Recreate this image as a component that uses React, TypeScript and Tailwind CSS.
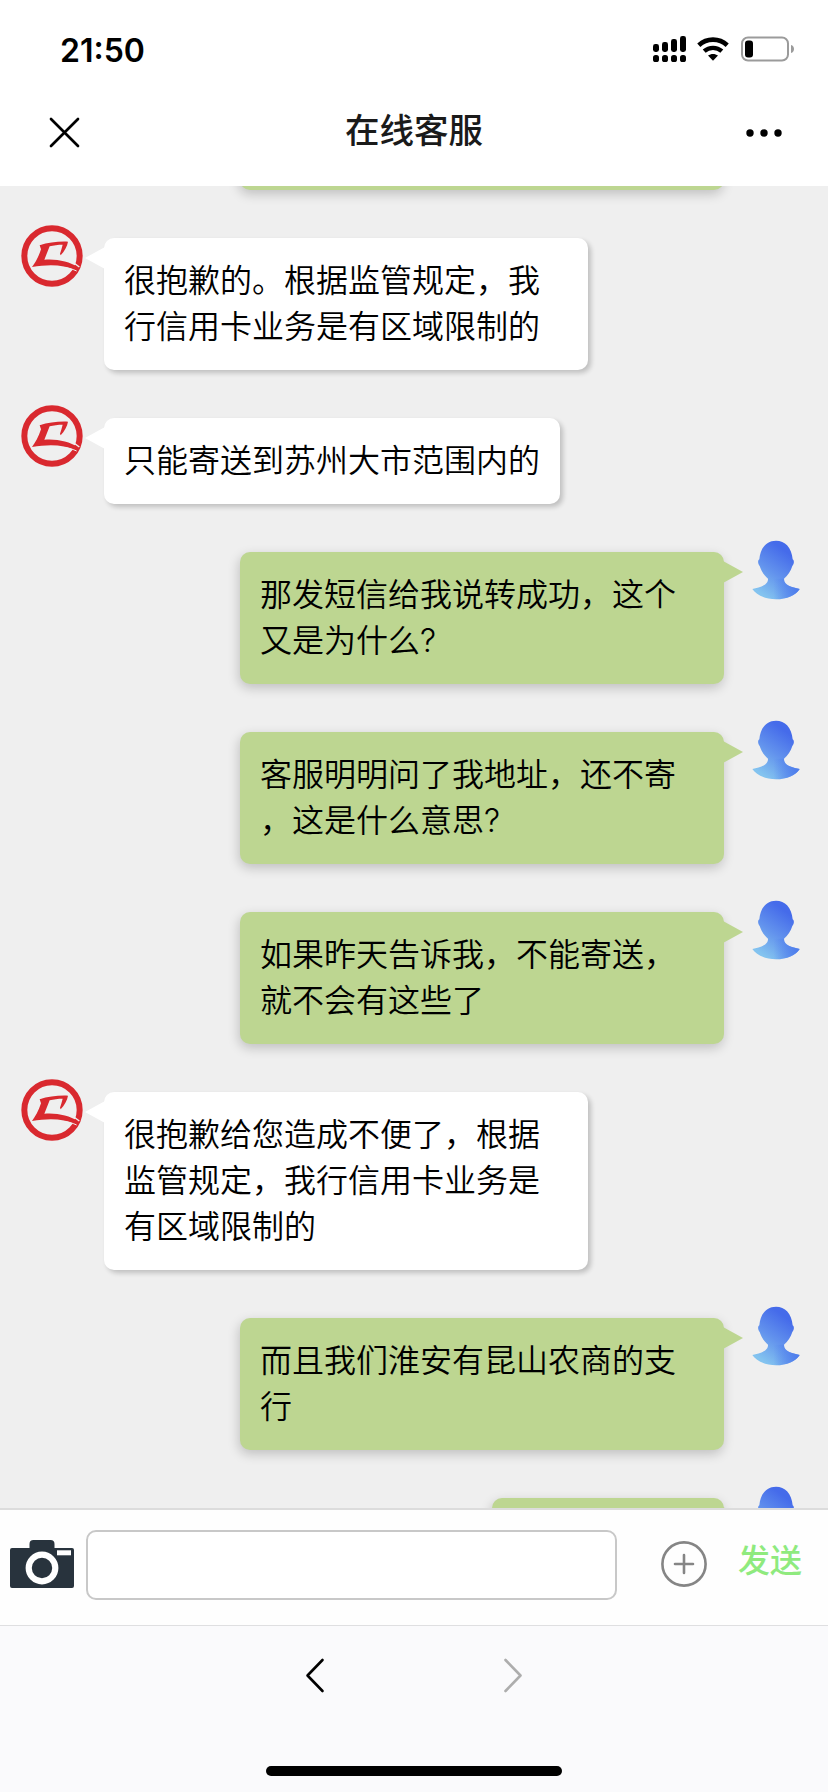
import React from 'react';

interface Message {
  from: 'bank' | 'me';
  lines: string[];
  bubbleClass: string;
}

const messages: Message[] = [
  { from: 'me', lines: [], bubbleClass: 'w-[484px] h-[132px]' },
  { from: 'bank', lines: ['很抱歉的。根据监管规定，我', '行信用卡业务是有区域限制的'], bubbleClass: 'w-[484px]' },
  { from: 'bank', lines: ['只能寄送到苏州大市范围内的'], bubbleClass: 'w-[456px]' },
  { from: 'me', lines: ['那发短信给我说转成功，这个', '又是为什么?'], bubbleClass: 'w-[484px]' },
  { from: 'me', lines: ['客服明明问了我地址，还不寄', '，这是什么意思?'], bubbleClass: 'w-[484px]' },
  { from: 'me', lines: ['如果昨天告诉我，不能寄送，', '就不会有这些了'], bubbleClass: 'w-[484px]' },
  { from: 'bank', lines: ['很抱歉给您造成不便了，根据', '监管规定，我行信用卡业务是', '有区域限制的'], bubbleClass: 'w-[484px]' },
  { from: 'me', lines: ['而且我们淮安有昆山农商的支', '行'], bubbleClass: 'w-[484px]' },
  { from: 'me', lines: [], bubbleClass: 'w-[232px] h-[86px]' },
];

const BankAvatar: React.FC = () => (
  <svg className="-mt-[13px] h-[62px] w-[62px] shrink-0" viewBox="63 75 186 186" fill="#d9292f">
    <circle cx="156" cy="168" r="83" fill="none" stroke="#d9292f" strokeWidth="18" />
    <path d="M119 136C145 127 174 124 204 125C202 139 193 154 182 166L180 161C183 152 186 142 188 134C174 134 161 136 149 139L133 179C171 176 206 184 236 202L228 212C189 192 144 193 96 201C106 188 116 170 123 148Z" />
    <path d="M212 184C221 188 230 194 238 201" fill="none" stroke="#efefef" strokeWidth="4" />
    <path d="M196 202C207 204 219 208 230 213" fill="none" stroke="#efefef" strokeWidth="3" />
  </svg>
);

const UserAvatar: React.FC = () => (
  <svg className="-mt-3 h-[60px] w-12 shrink-0" viewBox="216 60 144 180">
    <defs>
      <linearGradient id="person" gradientUnits="userSpaceOnUse" x1="325" y1="100" x2="240" y2="218">
        <stop offset="0" stopColor="#456bea" />
        <stop offset="0.5" stopColor="#6292ed" />
        <stop offset="1" stopColor="#83c3ef" />
      </linearGradient>
      <linearGradient id="shoulder" x1="0" y1="0" x2="1" y2="0">
        <stop offset="0.45" stopColor="#4d7cec" stopOpacity="0" />
        <stop offset="1" stopColor="#4d7cec" />
      </linearGradient>
    </defs>
    <path fill="url(#person)" d="M288 62C315 62 335 82 338 118C343 121 343 130 337 138C332 154 324 165 312 176C311 196 335 202 359 207C348 225 320 238 288 238C256 238 229 225 217 207C240 202 265 196 264 176C252 165 244 154 239 138C233 130 233 121 238 118C241 82 261 62 288 62Z" />
    <path fill="url(#shoulder)" d="M264 176H312C311 196 335 202 359 207C348 225 320 238 288 238C256 238 229 225 217 207C240 202 265 196 264 176Z" />
  </svg>
);

const MessageRow: React.FC<{ message: Message }> = ({ message }) => {
  const text = message.lines.map((line) => (
    <p key={line} className="whitespace-nowrap">{line}</p>
  ));

  if (message.from === 'bank') {
    return (
      <div className="flex items-start gap-[21px] pl-[21px]">
        <BankAvatar />
        <div className={`relative rounded-[10px] bg-white p-5 shadow-[3px_3px_5px_rgba(0,0,0,0.2)] ${message.bubbleClass}`}>
          <svg className="absolute -left-[19px] top-[9px] h-[22px] w-5" viewBox="0 0 20 22">
            <path d="M0 11L20 0V22Z" fill="#fff" />
          </svg>
          {text}
        </div>
      </div>
    );
  }

  return (
    <div className="flex items-start justify-end gap-7 pr-7">
      <div className={`relative rounded-[10px] bg-[#bdd691] p-5 shadow-[-1px_4px_12px_rgba(0,0,0,0.2)] ${message.bubbleClass}`}>
        <svg className="absolute -right-[19px] top-[9px] h-[22px] w-5" viewBox="0 0 20 22">
          <path d="M20 11L0 0V22Z" fill="#bdd691" />
        </svg>
        {text}
      </div>
      <UserAvatar />
    </div>
  );
};

const StatusBar: React.FC = () => (
  <div className="flex h-[98px] items-center justify-between pl-[60px] pr-[33px]">
    <span className="pt-[3px] font-[Inter] text-[32px] font-semibold leading-none text-black">21:50</span>
    <div className="flex items-center">
      <svg className="mr-[11px] h-[26px] w-[33px]" viewBox="0 0 33 26">
        <rect x="0" y="8" width="6" height="8" rx="2.4" />
        <rect x="9" y="6" width="6" height="10" rx="2.4" />
        <rect x="18" y="3" width="6" height="13" rx="2.4" />
        <rect x="27" y="0" width="6" height="16" rx="2.4" />
        <rect x="0" y="19" width="6" height="7" rx="2.6" />
        <rect x="9" y="19" width="6" height="7" rx="2.6" />
        <rect x="18" y="19" width="6" height="7" rx="2.6" />
        <rect x="27" y="19" width="6" height="7" rx="2.6" />
      </svg>
      <svg className="mr-3 h-6 w-8" viewBox="0 0 32 24">
        <path d="M1.8 8.2C9.8 0.8 22.2 0.8 30.2 8.2" fill="none" stroke="#000" strokeWidth="4.6" />
        <path d="M7.2 14.2C12.2 9.8 19.8 9.8 24.8 14.2" fill="none" stroke="#000" strokeWidth="4.4" />
        <path d="M11 18.6C14 16.4 18 16.4 21 18.6L16 23.8Z" />
      </svg>
      <svg className="h-[26px] w-[54px]" viewBox="0 0 54 26">
        <rect x="1" y="1.5" width="46" height="23" rx="6" fill="#fff" stroke="#9b9b9b" strokeWidth="2" />
        <rect x="4" y="4.5" width="8" height="17" rx="3" />
        <path d="M50 9C54 10 54 16 50 17Z" fill="#9b9b9b" />
      </svg>
    </div>
  </div>
);

const TitleBar: React.FC = () => (
  <div className="flex h-[88px] items-center justify-between px-[46px] pb-[21px]">
    <svg className="h-9 w-9" viewBox="0 0 36 36">
      <path d="M5 5L32 32M32 5L5 32" fill="none" stroke="#000" strokeWidth="2.7" strokeLinecap="round" />
    </svg>
    <h1 className="text-[34.5px] font-medium leading-none text-[#1a1a1a]">在线客服</h1>
    <svg className="h-9 w-9" viewBox="0 0 36 36">
      <circle cx="4" cy="19" r="3.7" />
      <circle cx="18" cy="19" r="3.7" />
      <circle cx="32" cy="19" r="3.7" />
    </svg>
  </div>
);

const InputBar: React.FC = () => (
  <div className="flex h-[115px] items-start bg-[#fefefe] pl-[10px] pt-5">
    <svg className="mt-[10px] h-12 w-16" viewBox="0 0 64 48">
      <path d="M2 8H19.5V4Q19.5 0 23.5 0H40.5Q44.5 0 44.5 4V8H62Q64 8 64 10V46Q64 48 62 48H2Q0 48 0 46V10Q0 8 2 8Z" fill="#28333d" />
      <circle cx="32" cy="28" r="13.3" fill="none" stroke="#fff" strokeWidth="6.2" />
      <rect x="47" y="10.3" width="14" height="5" fill="#fff" />
    </svg>
    <input className="ml-3 h-[70px] w-[531px] rounded-[10px] border-2 border-[#c8c8c8] bg-white px-4 outline-none" />
    <svg className="ml-11 mt-[11px] h-[46px] w-[46px]" viewBox="0 0 46 46" fill="none" stroke="#858585" strokeWidth="2.6" strokeLinecap="round">
      <circle cx="23" cy="23" r="21.6" />
      <path d="M23 14V32M14 23H32" />
    </svg>
    <button className="ml-[31px] mt-2 font-medium text-[#8fea7e]">发送</button>
  </div>
);

const BrowserBar: React.FC = () => (
  <div className="flex h-[167px] flex-col items-center justify-between border-t border-[#dfdfe1] bg-[#fafafc] pb-4 pt-[31px]">
    <div className="flex gap-[176px]">
      <svg className="h-9 w-[22px]" viewBox="0 0 22 36">
        <path d="M18.5 3L3.5 18.5L18.5 34" fill="none" stroke="#000" strokeWidth="2.6" strokeLinecap="round" strokeLinejoin="round" />
      </svg>
      <svg className="h-9 w-[22px]" viewBox="0 0 22 36">
        <path d="M3.5 3L18.5 18.5L3.5 34" fill="none" stroke="#adadad" strokeWidth="2.6" strokeLinecap="round" strokeLinejoin="round" />
      </svg>
    </div>
    <div className="h-[10px] w-[296px] rounded-full bg-black" />
  </div>
);

export default function App() {
  return (
    <div className="flex h-[1792px] w-[828px] flex-col overflow-hidden bg-white font-['Inter','Noto_Sans_CJK_SC',sans-serif] text-[32px] leading-[46px] text-black">
      <StatusBar />
      <TitleBar />
      <main className="h-[1324px] overflow-hidden border-b-2 border-[#dcdcdc] bg-[#efefef] font-[350]">
        <div className="-mt-32 flex flex-col gap-12">
          {messages.map((message, i) => (
            <MessageRow key={i} message={message} />
          ))}
        </div>
      </main>
      <InputBar />
      <BrowserBar />
    </div>
  );
}
